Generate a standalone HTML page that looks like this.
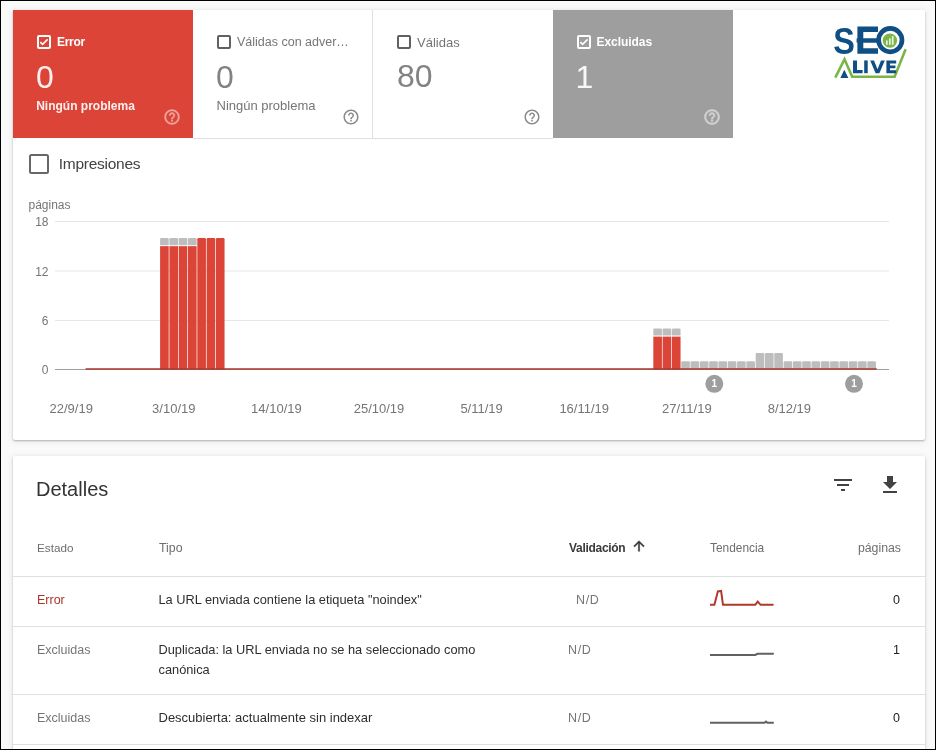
<!DOCTYPE html>
<html><head><meta charset="utf-8">
<style>
*{box-sizing:border-box;margin:0;padding:0}
html,body{width:936px;height:750px;overflow:hidden}
body{position:relative;background:#fafafa;font-family:"Liberation Sans",sans-serif;border:1px solid #000}
.a{position:absolute;white-space:nowrap;line-height:1}
.card{position:absolute;left:12px;width:912px;background:#fff;border-radius:2px;box-shadow:0 1px 2px rgba(0,0,0,.26),0 1px 6px 1px rgba(0,0,0,.08)}
.tab{position:absolute;top:0;height:128px;width:180px}
.cb{position:absolute;width:14px;height:14px;border:2px solid #616161;border-radius:2px}
.cbw{border-color:#fff}
.cbw svg{position:absolute;left:0;top:0}
.q{position:absolute}
.gl{fill:#757575;font-size:12px}
</style></head><body>
<div id="root" style="position:absolute;left:0;top:0;width:934px;height:748px;will-change:transform">
<!-- card 1 -->
<div class="card" id="c1" style="top:9px;height:430px">
  <div class="tab" style="left:0;background:#db4437"></div>
  <div class="tab" style="left:180px;border-right:1px solid #e0e0e0;border-bottom:1px solid #e0e0e0;height:129px"></div>
  <div class="tab" style="left:360px;border-bottom:1px solid #e0e0e0;height:129px"></div>
  <div class="tab" style="left:540px;background:#9e9e9e"></div>

  <!-- tab 1 -->
  <div class="cb cbw" style="left:24px;top:25px"><svg width="10" height="10" viewBox="0 0 10 10"><path d="M1.3 5.2 L3.6 7.4 L8.6 2.4" fill="none" stroke="#fff" stroke-width="1.6"/></svg></div>
  <div class="a" style="left:44px;top:26px;font-size:12px;font-weight:700;color:#fff;letter-spacing:-.3px">Error</div>
  <div class="a" style="left:23px;top:50.7px;font-size:32px;color:rgba(255,255,255,.92)">0</div>
  <div class="a" style="left:23.2px;top:89.7px;font-size:12px;font-weight:700;color:rgba(255,255,255,.92)">Ningún problema</div>
  <svg class="q" style="left:149.5px;top:98px" width="18" height="18" viewBox="0 0 24 24"><path d="M11 18h2v-2h-2v2zm1-16C6.48 2 2 6.48 2 12s4.48 10 10 10 10-4.48 10-10S17.52 2 12 2zm0 18c-4.41 0-8-3.59-8-8s3.59-8 8-8 8 3.59 8 8-3.59 8-8 8zm0-14c-2.21 0-4 1.79-4 4h2c0-1.1.9-2 2-2s2 .9 2 2c0 2-3 1.75-3 5h2c0-2.25 3-2.5 3-5 0-2.21-1.79-4-4-4z" fill="#eea49c" stroke="#eea49c" stroke-width=".5"/></svg>

  <!-- tab 2 -->
  <div class="cb" style="left:204px;top:25px"></div>
  <div class="a" style="left:224px;top:26px;font-size:12.5px;color:#757575">Válidas con adver…</div>
  <div class="a" style="left:203px;top:50.5px;font-size:32px;color:#838383">0</div>
  <div class="a" style="left:203.5px;top:89px;font-size:13px;color:#757575">Ningún problema</div>
  <svg class="q" style="left:329.2px;top:98px" width="18" height="18" viewBox="0 0 24 24"><path d="M11 18h2v-2h-2v2zm1-16C6.48 2 2 6.48 2 12s4.48 10 10 10 10-4.48 10-10S17.52 2 12 2zm0 18c-4.41 0-8-3.59-8-8s3.59-8 8-8 8 3.59 8 8-3.59 8-8 8zm0-14c-2.21 0-4 1.79-4 4h2c0-1.1.9-2 2-2s2 .9 2 2c0 2-3 1.75-3 5h2c0-2.25 3-2.5 3-5 0-2.21-1.79-4-4-4z" fill="#8a8a8a"/></svg>

  <!-- tab 3 -->
  <div class="cb" style="left:384px;top:25px"></div>
  <div class="a" style="left:404px;top:26px;font-size:13px;color:#757575">Válidas</div>
  <div class="a" style="left:384px;top:49.5px;font-size:32px;color:#838383">80</div>
  <svg class="q" style="left:509.6px;top:98px" width="18" height="18" viewBox="0 0 24 24"><path d="M11 18h2v-2h-2v2zm1-16C6.48 2 2 6.48 2 12s4.48 10 10 10 10-4.48 10-10S17.52 2 12 2zm0 18c-4.41 0-8-3.59-8-8s3.59-8 8-8 8 3.59 8 8-3.59 8-8 8zm0-14c-2.21 0-4 1.79-4 4h2c0-1.1.9-2 2-2s2 .9 2 2c0 2-3 1.75-3 5h2c0-2.25 3-2.5 3-5 0-2.21-1.79-4-4-4z" fill="#8a8a8a"/></svg>

  <!-- tab 4 -->
  <div class="cb cbw" style="left:564px;top:25px"><svg width="10" height="10" viewBox="0 0 10 10"><path d="M1.3 5.2 L3.6 7.4 L8.6 2.4" fill="none" stroke="#fff" stroke-width="1.6"/></svg></div>
  <div class="a" style="left:583.5px;top:26px;font-size:12px;font-weight:700;color:#fff;letter-spacing:-.05px">Excluidas</div>
  <div class="a" style="left:562.5px;top:50.5px;font-size:32px;color:rgba(255,255,255,.92)">1</div>
  <svg class="q" style="left:689.5px;top:98px" width="18" height="18" viewBox="0 0 24 24"><path d="M11 18h2v-2h-2v2zm1-16C6.48 2 2 6.48 2 12s4.48 10 10 10 10-4.48 10-10S17.52 2 12 2zm0 18c-4.41 0-8-3.59-8-8s3.59-8 8-8 8 3.59 8 8-3.59 8-8 8zm0-14c-2.21 0-4 1.79-4 4h2c0-1.1.9-2 2-2s2 .9 2 2c0 2-3 1.75-3 5h2c0-2.25 3-2.5 3-5 0-2.21-1.79-4-4-4z" fill="#d3d3d3" stroke="#d3d3d3" stroke-width=".7"/></svg>

  <!-- logo -->
  <svg class="a" style="left:-13px;top:-10px" width="936" height="90" viewBox="0 0 936 90">
    <text x="0" y="0" font-family="Liberation Sans" font-weight="700" font-size="37.7" fill="#0f4f84" transform="translate(833.3 53.8) scale(0.86 1)">S</text>
    <path d="M857.4 26.4 H878 V32 H863.3 V38.2 H877 V42.8 H863.3 V48.2 H878 V53.8 H857.4 Z" fill="#0f4f84"/>
    <rect x="856.6" y="38.4" width="3" height="4.2" fill="#0f4f84"/>
    <circle cx="890.3" cy="40.1" r="11.7" fill="none" stroke="#0f4f84" stroke-width="4.7"/>
    <circle cx="889.9" cy="40.6" r="7.2" fill="#7cb547"/>
    <rect x="886" y="40.5" width="1.7" height="4.3" fill="#e9f3df"/><rect x="889" y="38.4" width="1.7" height="6.4" fill="#e9f3df"/><rect x="891.8" y="36.2" width="1.8" height="8.6" fill="#e9f3df"/>
    <path d="M835.3 77.6 L844.5 59.2 L852.2 76.8 H894.6 L905.6 49.2" fill="none" stroke="#7cb547" stroke-width="2.6" stroke-linejoin="miter"/>
    <path d="M840.3 77.9 L844.3 69.8 L848.4 77.9 Z" fill="#0f4f84"/>
    <path d="M853 60.4 H857 V70 H862.6 V73.2 H853 Z" fill="#0f4f84"/>
    <rect x="864.2" y="60.4" width="3.5" height="12.8" fill="#0f4f84"/>
    <path d="M870.2 60.4 H874 L877.5 69.2 L881 60.4 H884.8 L879.4 73.2 H875.6 Z" fill="#0f4f84"/>
    <path d="M886.4 60.4 H896.2 V63.4 H890 V65.4 H895.4 V68.2 H890 V70.2 H896.2 V73.2 H886.4 Z" fill="#0f4f84"/>
  </svg>

  <!-- impresiones -->
  <div class="a" style="left:16px;top:144px;width:20px;height:20px;border:2px solid #676767;border-radius:2.5px"></div>
  <div class="a" style="left:45.7px;top:145.5px;font-size:15.5px;letter-spacing:-.25px;color:#424242">Impresiones</div>

  <!-- chart -->
  <svg class="a" style="left:0;top:0" width="912" height="430" viewBox="13 10 912 430">
    <text x="28.5" y="208.5" class="gl">páginas</text>
    <g fill="none" stroke="#e6e6e6" stroke-width="1">
      <line x1="55" y1="221.5" x2="889" y2="221.5"/>
      <line x1="55" y1="271" x2="889" y2="271"/>
      <line x1="55" y1="320.5" x2="889" y2="320.5"/>
    </g>
    <text x="48.5" y="226" class="gl" text-anchor="end">18</text>
    <text x="48.5" y="275.5" class="gl" text-anchor="end">12</text>
    <text x="48.5" y="325" class="gl" text-anchor="end">6</text>
    <text x="48.5" y="374" class="gl" text-anchor="end">0</text>
    <line x1="55" y1="369.5" x2="889" y2="369.5" stroke="#9e9e9e" stroke-width="1"/>
    <g id="bars"><rect x="160.10" y="246.17" width="8.61" height="123.33" fill="#db4437"/><path d="M160.10 245.17 V239.14 q0 -1.2 1.2 -1.2 h6.21 q1.2 0 1.2 1.2 V245.17Z" fill="#bdbdbd"/><rect x="169.41" y="246.17" width="8.61" height="123.33" fill="#db4437"/><path d="M169.41 245.17 V239.14 q0 -1.2 1.2 -1.2 h6.21 q1.2 0 1.2 1.2 V245.17Z" fill="#bdbdbd"/><rect x="178.71" y="246.17" width="8.61" height="123.33" fill="#db4437"/><path d="M178.71 245.17 V239.14 q0 -1.2 1.2 -1.2 h6.21 q1.2 0 1.2 1.2 V245.17Z" fill="#bdbdbd"/><rect x="188.02" y="246.17" width="8.61" height="123.33" fill="#db4437"/><path d="M188.02 245.17 V239.14 q0 -1.2 1.2 -1.2 h6.21 q1.2 0 1.2 1.2 V245.17Z" fill="#bdbdbd"/><path d="M197.32 369.50 V239.14 q0 -1.2 1.2 -1.2 h6.21 q1.2 0 1.2 1.2 V369.50Z" fill="#db4437"/><path d="M206.63 369.50 V239.14 q0 -1.2 1.2 -1.2 h6.21 q1.2 0 1.2 1.2 V369.50Z" fill="#db4437"/><path d="M215.94 369.50 V239.14 q0 -1.2 1.2 -1.2 h6.21 q1.2 0 1.2 1.2 V369.50Z" fill="#db4437"/><rect x="653.32" y="336.61" width="8.61" height="32.89" fill="#db4437"/><path d="M653.32 335.61 V329.59 q0 -1.2 1.2 -1.2 h6.21 q1.2 0 1.2 1.2 V335.61Z" fill="#bdbdbd"/><rect x="662.62" y="336.61" width="8.61" height="32.89" fill="#db4437"/><path d="M662.62 335.61 V329.59 q0 -1.2 1.2 -1.2 h6.21 q1.2 0 1.2 1.2 V335.61Z" fill="#bdbdbd"/><rect x="671.93" y="336.61" width="8.61" height="32.89" fill="#db4437"/><path d="M671.93 335.61 V329.59 q0 -1.2 1.2 -1.2 h6.21 q1.2 0 1.2 1.2 V335.61Z" fill="#bdbdbd"/><path d="M681.24 369.50 V362.48 q0 -1.2 1.2 -1.2 h6.21 q1.2 0 1.2 1.2 V369.50Z" fill="#bdbdbd"/><path d="M690.54 369.50 V362.48 q0 -1.2 1.2 -1.2 h6.21 q1.2 0 1.2 1.2 V369.50Z" fill="#bdbdbd"/><path d="M699.85 369.50 V362.48 q0 -1.2 1.2 -1.2 h6.21 q1.2 0 1.2 1.2 V369.50Z" fill="#bdbdbd"/><path d="M709.15 369.50 V362.48 q0 -1.2 1.2 -1.2 h6.21 q1.2 0 1.2 1.2 V369.50Z" fill="#bdbdbd"/><path d="M718.46 369.50 V362.48 q0 -1.2 1.2 -1.2 h6.21 q1.2 0 1.2 1.2 V369.50Z" fill="#bdbdbd"/><path d="M727.77 369.50 V362.48 q0 -1.2 1.2 -1.2 h6.21 q1.2 0 1.2 1.2 V369.50Z" fill="#bdbdbd"/><path d="M737.07 369.50 V362.48 q0 -1.2 1.2 -1.2 h6.21 q1.2 0 1.2 1.2 V369.50Z" fill="#bdbdbd"/><path d="M746.38 369.50 V362.48 q0 -1.2 1.2 -1.2 h6.21 q1.2 0 1.2 1.2 V369.50Z" fill="#bdbdbd"/><path d="M755.68 369.50 V354.26 q0 -1.2 1.2 -1.2 h6.21 q1.2 0 1.2 1.2 V369.50Z" fill="#bdbdbd"/><path d="M764.99 369.50 V354.26 q0 -1.2 1.2 -1.2 h6.21 q1.2 0 1.2 1.2 V369.50Z" fill="#bdbdbd"/><path d="M774.30 369.50 V354.26 q0 -1.2 1.2 -1.2 h6.21 q1.2 0 1.2 1.2 V369.50Z" fill="#bdbdbd"/><path d="M783.60 369.50 V362.48 q0 -1.2 1.2 -1.2 h6.21 q1.2 0 1.2 1.2 V369.50Z" fill="#bdbdbd"/><path d="M792.91 369.50 V362.48 q0 -1.2 1.2 -1.2 h6.21 q1.2 0 1.2 1.2 V369.50Z" fill="#bdbdbd"/><path d="M802.21 369.50 V362.48 q0 -1.2 1.2 -1.2 h6.21 q1.2 0 1.2 1.2 V369.50Z" fill="#bdbdbd"/><path d="M811.52 369.50 V362.48 q0 -1.2 1.2 -1.2 h6.21 q1.2 0 1.2 1.2 V369.50Z" fill="#bdbdbd"/><path d="M820.83 369.50 V362.48 q0 -1.2 1.2 -1.2 h6.21 q1.2 0 1.2 1.2 V369.50Z" fill="#bdbdbd"/><path d="M830.13 369.50 V362.48 q0 -1.2 1.2 -1.2 h6.21 q1.2 0 1.2 1.2 V369.50Z" fill="#bdbdbd"/><path d="M839.44 369.50 V362.48 q0 -1.2 1.2 -1.2 h6.21 q1.2 0 1.2 1.2 V369.50Z" fill="#bdbdbd"/><path d="M848.74 369.50 V362.48 q0 -1.2 1.2 -1.2 h6.21 q1.2 0 1.2 1.2 V369.50Z" fill="#bdbdbd"/><path d="M858.05 369.50 V362.48 q0 -1.2 1.2 -1.2 h6.21 q1.2 0 1.2 1.2 V369.50Z" fill="#bdbdbd"/><path d="M867.36 369.50 V362.48 q0 -1.2 1.2 -1.2 h6.21 q1.2 0 1.2 1.2 V369.50Z" fill="#bdbdbd"/><line x1="85.6" y1="369" x2="876.7" y2="369" stroke="#a8392e" stroke-width="1.3"/></g>
    <g class="gl" text-anchor="middle" style="font-size:13px">
      <text x="71.2" y="413">22/9/19</text>
      <text x="173.8" y="413">3/10/19</text>
      <text x="276.4" y="413">14/10/19</text>
      <text x="379.0" y="413">25/10/19</text>
      <text x="481.6" y="413">5/11/19</text>
      <text x="584.2" y="413">16/11/19</text>
      <text x="686.8" y="413">27/11/19</text>
      <text x="789.4" y="413">8/12/19</text>
    </g>
    <circle cx="714.3" cy="383.8" r="9" fill="#9e9e9e"/>
    <text x="714.3" y="387.3" text-anchor="middle" font-size="10" font-weight="700" fill="#fff" font-family="Liberation Sans">1</text>
    <circle cx="854" cy="383.8" r="9" fill="#9e9e9e"/>
    <text x="854" y="387.3" text-anchor="middle" font-size="10" font-weight="700" fill="#fff" font-family="Liberation Sans">1</text>
  </svg>
</div>

<!-- card 2 -->
<div class="card" id="c2" style="top:455px;height:320px">
  <div class="a" style="left:23px;top:22.5px;font-size:20px;color:#333">Detalles</div>
  <svg class="a" style="left:817.5px;top:17px" width="24" height="24" viewBox="0 0 24 24"><path d="M10 18h4v-2h-4v2zM3 6v2h18V6H3zm3 7h12v-2H6v2z" fill="#424242"/></svg>
  <svg class="a" style="left:865px;top:16.5px" width="24" height="24" viewBox="0 0 24 24"><path d="M19 9h-4V3H9v6H5l7 7 7-7zM5 18v2h14v-2H5z" fill="#424242"/></svg>
  <div class="a" style="left:24px;top:86px;font-size:11.7px;color:#6e6e6e">Estado</div>
  <div class="a" style="left:146px;top:86px;font-size:12.3px;color:#6e6e6e">Tipo</div>
  <div class="a" style="left:556px;top:86px;font-size:12px;font-weight:700;color:#3a3a3a;letter-spacing:-.3px">Validación</div>
  <svg class="a" style="left:618px;top:81.5px" width="16" height="16" viewBox="0 0 24 24"><path d="M4 12l1.41 1.41L11 7.83V20h2V7.83l5.58 5.59L20 12l-8-8-8 8z" fill="#333" stroke="#333" stroke-width=".6"/></svg>
  <div class="a" style="left:697px;top:87px;font-size:11.9px;color:#6e6e6e">Tendencia</div>
  <div class="a" style="right:24px;top:86px;font-size:12.3px;color:#6e6e6e">páginas</div>
  <div class="a" style="left:0;top:120px;width:912px;height:1px;background:#e0e0e0"></div>

  <div class="a" style="left:24px;top:137.5px;font-size:12.5px;color:#a8372b">Error</div>
  <div class="a" style="left:145.5px;top:138px;font-size:12.8px;color:#2e2e2e">La URL enviada contiene la etiqueta "noindex"</div>
  <div class="a" style="left:563px;top:138px;font-size:12.5px;color:#757575;letter-spacing:.6px">N/D</div>
  <svg class="a" style="left:695px;top:129px" width="70" height="25" viewBox="0 0 70 25"><path d="M2 19.8 H6.4 L9.9 6.3 L13.1 5.9 L15 19.8 H47.3 L49.7 16.6 L52.6 19.8 H65.6" fill="none" stroke="#b0392c" stroke-width="2"/></svg>
  <div class="a" style="right:25px;top:137.5px;font-size:12.5px;color:#212121">0</div>
  <div class="a" style="left:0;top:170px;width:912px;height:1px;background:#e0e0e0"></div>

  <div class="a" style="left:24px;top:188px;font-size:12.5px;color:#757575">Excluidas</div>
  <div class="a" style="left:145.5px;font-size:12.8px;color:#2e2e2e;line-height:19.5px;top:184px">Duplicada: la URL enviada no se ha seleccionado como<br>canónica</div>
  <div class="a" style="left:555px;top:188px;font-size:12.5px;color:#757575;letter-spacing:.6px">N/D</div>
  <svg class="a" style="left:695px;top:179.2px" width="70" height="25" viewBox="0 0 70 25"><path d="M2 20 H47.2 L49.6 18.8 H65.8" fill="none" stroke="#616161" stroke-width="2"/></svg>
  <div class="a" style="right:25px;top:188px;font-size:12.5px;color:#212121">1</div>
  <div class="a" style="left:0;top:238px;width:912px;height:1px;background:#e0e0e0"></div>

  <div class="a" style="left:24px;top:256px;font-size:12.5px;color:#757575">Excluidas</div>
  <div class="a" style="left:145.5px;top:255px;font-size:13px;color:#2e2e2e">Descubierta: actualmente sin indexar</div>
  <div class="a" style="left:555px;top:256px;font-size:12.5px;color:#757575;letter-spacing:.6px">N/D</div>
  <svg class="a" style="left:695px;top:247.3px" width="70" height="25" viewBox="0 0 70 25"><path d="M2 19.8 H56.6 L58 18.6 L59.4 19.8 H65.8" fill="none" stroke="#616161" stroke-width="2"/></svg>
  <div class="a" style="right:25px;top:256px;font-size:12.5px;color:#212121">0</div>
  <div class="a" style="left:0;top:288px;width:912px;height:1px;background:#e0e0e0"></div>
</div>
</div>
</body></html>
